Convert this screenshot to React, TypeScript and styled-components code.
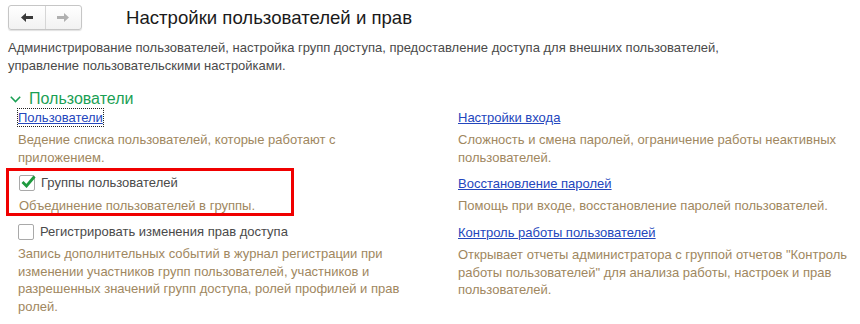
import React from "react";
import styled, { createGlobalStyle } from "styled-components";

const Global = createGlobalStyle`
  html, body { margin: 0; padding: 0; background: #fff; }
  body { font-family: "Liberation Sans", Arial, sans-serif; color: #4d4d4d; }
  * { box-sizing: border-box; }
`;

const Page = styled.div`
  width: 860px;
  height: 324px;
  overflow: hidden;
  position: relative;
`;

const Header = styled.div`
  display: flex;
  align-items: center;
  padding: 5px 0 0 8px;
  height: 30px;
`;

const NavGroup = styled.div`
  display: flex;
  width: 74px;
  height: 25px;
  border: 1px solid #c6c6c6;
  border-radius: 3px;
  background: linear-gradient(#ffffff, #f2f2f2);
  box-shadow: 0 1px 1px rgba(0, 0, 0, 0.12);
`;

const NavButton = styled.div<{ $divider?: boolean }>`
  flex: 1;
  display: flex;
  align-items: center;
  justify-content: center;
  border-left: ${(p) => (p.$divider ? "1px solid #d6d6d6" : "none")};
`;

const Title = styled.h1`
  margin: 0 0 0 44px;
  font-size: 18.6px;
  font-weight: normal;
  color: #1a1a1a;
  line-height: 22px;
`;

const Intro = styled.p`
  margin: 9px 0 0 8px;
  width: 720px;
  font-size: 13px;
  line-height: 18px;
  color: #4a4a4a;
`;

const GroupHeader = styled.div`
  display: flex;
  align-items: center;
  gap: 8px;
  margin: 14px 0 0 10px;
  height: 20px;
  font-size: 16px;
  color: #1aa054;
`;

const Grid = styled.div`
  display: grid;
  grid-template-columns: 440px 1fr;
  padding-left: 18px;
`;

const Item = styled.div<{ $top?: number }>`
  display: flex;
  flex-direction: column;
  gap: 5px;
  padding-top: ${(p) => p.$top ?? 0}px;
`;

const Link = styled.a<{ $focused?: boolean }>`
  align-self: flex-start;
  font-size: 13px;
  line-height: 17px;
  color: #2346bd;
  text-decoration: underline;
  outline: ${(p) => (p.$focused ? "1px dotted #222" : "none")};
  outline-offset: 0px;
  cursor: pointer;
`;

const Desc = styled.div`
  font-size: 13px;
  line-height: 17.6px;
  color: #a08760;
  width: 395px;
`;

const Highlight = styled.div`
  margin: 2px 0 0 -12px;
  width: 288px;
  height: 48px;
  border: 3px solid #f00000;
  padding: 3px 0 0 10px;
  display: flex;
  flex-direction: column;
  gap: 6px;
  white-space: nowrap;
`;

const CheckRow = styled.label`
  display: flex;
  align-items: center;
  gap: 6px;
  font-size: 13px;
  line-height: 17px;
  color: #4a4a4a;
`;

const Box = styled.span`
  width: 16px;
  height: 16px;
  border: 1px solid #a9a9a9;
  border-radius: 2px;
  background: #fff;
  display: inline-flex;
  align-items: center;
  justify-content: center;
  flex: none;
`;

const Chevron = () => (
  <svg width="11" height="7" viewBox="0 0 11 7">
    <polyline points="0.8,0.8 5.5,5.6 10.2,0.8" fill="none" stroke="#1aa054" strokeWidth="1.5" />
  </svg>
);

const ArrowLeft = () => (
  <svg width="12" height="9" viewBox="0 0 12 9">
    <path d="M0 4.5 L5 0 L5 3 L12 3 L12 6 L5 6 L5 9 Z" fill="#3a3a3a" />
  </svg>
);

const ArrowRight = () => (
  <svg width="12" height="9" viewBox="0 0 12 9">
    <path d="M12 4.5 L7 0 L7 3 L0 3 L0 6 L7 6 L7 9 Z" fill="#b0b0b0" />
  </svg>
);

const Check = () => (
  <svg width="15" height="13" viewBox="0 0 15 13" style={{ marginTop: -3, marginRight: -2 }}>
    <path d="M1.5 7 L5.5 11 L13.5 1.5" fill="none" stroke="#1f9a3f" strokeWidth="2.8" />
  </svg>
);

export default function App() {
  return (
    <Page>
      <Global />
      <Header>
        <NavGroup>
          <NavButton>
            <ArrowLeft />
          </NavButton>
          <NavButton $divider>
            <ArrowRight />
          </NavButton>
        </NavGroup>
        <Title>Настройки пользователей и прав</Title>
      </Header>
      <Intro>
        Администрирование пользователей, настройка групп доступа, предоставление доступа для внешних пользователей,
        управление пользовательскими настройками.
      </Intro>
      <GroupHeader>
        <Chevron />
        Пользователи
      </GroupHeader>
      <Grid>
        <Item>
          <Link $focused>Пользователи</Link>
          <Desc>
            Ведение списка пользователей, которые работают с<br />
            приложением.
          </Desc>
        </Item>
        <Item>
          <Link>Настройки входа</Link>
          <Desc>Сложность и смена паролей, ограничение работы неактивных пользователей.</Desc>
        </Item>
        <Highlight>
          <CheckRow>
            <Box>
              <Check />
            </Box>
            Группы пользователей
          </CheckRow>
          <Desc>Объединение пользователей в группы.</Desc>
        </Highlight>
        <Item $top={9}>
          <Link>Восстановление паролей</Link>
          <Desc>Помощь при входе, восстановление паролей пользователей.</Desc>
        </Item>
        <Item $top={7}>
          <CheckRow>
            <Box />
            Регистрировать изменения прав доступа
          </CheckRow>
          <Desc>
            Запись дополнительных событий в журнал регистрации при изменении участников групп пользователей, участников и
            разрешенных значений групп доступа, ролей профилей и прав ролей.
          </Desc>
        </Item>
        <Item $top={8}>
          <Link>Контроль работы пользователей</Link>
          <Desc>
            Открывает отчеты администратора с группой отчетов "Контроль работы пользователей" для анализа работы,
            настроек и прав пользователей.
          </Desc>
        </Item>
      </Grid>
    </Page>
  );
}
